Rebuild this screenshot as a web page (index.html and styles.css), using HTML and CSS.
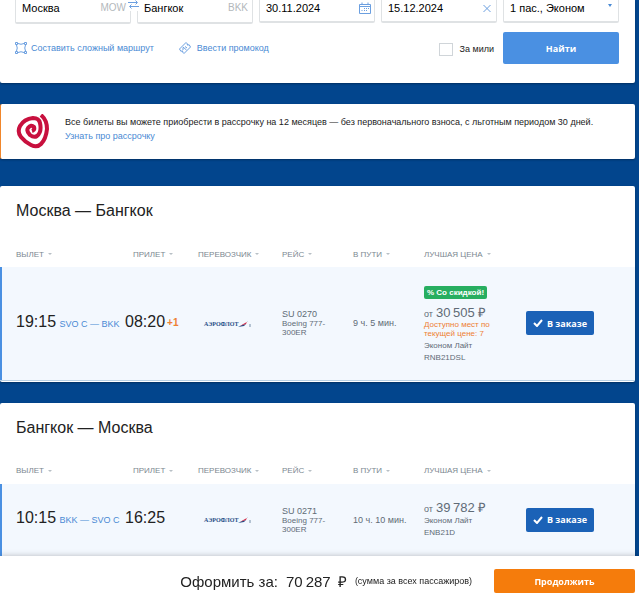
FILE: index.html
```html
<!DOCTYPE html>
<html lang="ru">
<head>
    <meta charset="UTF-8">
    <meta name="viewport" content="width=device-width, initial-scale=1.0">
    <title>Москва — Бангкок</title>
    <link rel="stylesheet" href="styles.css">
</head>
<body>
    <!-- Search form -->
    <form class="card search">
        <div class="fields">
            <div class="field tall">
                <input type="text" value="Москва" aria-label="Откуда">
                <span class="code">MOW</span>
                <button type="button" class="swap" aria-label="Поменять местами">
                    <svg width="11" height="9" viewBox="0 0 11 9"><path d="M0 2.500h9M7.500 .5l2 2-2 2M11 6.500H2M3.500 4.500l-2 2 2 2" /></svg>
                </button>
            </div>
            <div class="field tall">
                <input type="text" value="Бангкок" aria-label="Куда">
                <span class="code">BKK</span>
            </div>
            <div class="field">
                <input type="text" value="30.11.2024" aria-label="Туда">
                <svg class="field-icon" width="12" height="12" viewBox="0 0 12 12"><path d="M.5 2.500h11v9H.5zM.5 4.500h11M3 .5v2M9 .5v2" /><path d="M5 6.500h1M7 6.500h1M9 6.500h1M2.500 8.500h1M5 8.500h1M7 8.500h1" /></svg>
            </div>
            <div class="field">
                <input type="text" value="15.12.2024" aria-label="Обратно">
                <svg class="field-icon" width="12" height="12" viewBox="0 0 12 12"><path d="M2.500 3l7 7M9.500 3l-7 7" /></svg>
            </div>
            <div class="field">
                <select aria-label="Пассажиры">
                    <option>1 пас., Эконом</option>
                </select>
                <svg class="arrow" width="4" height="3" viewBox="0 0 4 3"><path d="M0 0h4L2 3z" /></svg>
            </div>
        </div>
        <div class="options">
            <a href="#" class="option">
                <svg width="12" height="12" viewBox="0 0 12 12"><path d="M.5.5h2v2h-2zM9.500.5h2v2h-2zM.5 9.500h2v2h-2zM9.500 9.500h2v2h-2zM3 1.500q3 1.500 6 0M3 10.500q3-1.500 6 0M1.500 3q1.500 3 0 6M10.500 3q-1.500 3 0 6" /></svg>
                Составить сложный маршрут
            </a>
            <a href="#" class="option promo">
                <svg width="12" height="12" viewBox="0 0 12 12"><path d="M7 .5l1.500 1.500-.3 1 1 .1.800-.6L11.500 5 5 11.500 3.500 10l.3-1-1-.1-.800.6L.5 7zM4 5l3.500 3M4 8V5.500M6 4.500l2 1.500" /></svg>
                Ввести промокод
            </a>
            <label class="miles"><input type="checkbox">За мили</label>
            <button type="submit" class="btn find">Найти</button>
        </div>
    </form>

    <!-- Installment banner -->
    <div class="card banner">
        <svg class="banner-logo" width="34" height="35" viewBox="0 0 34 35">
            <path class="swirl" d="M25 1Q31 6 31 15Q30 25 25 30Q21 34 15 31Q9 28 5 23Q1 18 4 12Q8 5 17 4Q23 4 24 9Q26 18 21 22Q18 24 14 21Q10 17 12 14Q15 10 18 13Q19 16 16 17" />
        </svg>
        <div>
            <p>Все билеты вы можете приобрести в рассрочку на 12 месяцев — без первоначального взноса, с льготным периодом 30 дней.</p>
            <a href="#">Узнать про рассрочку</a>
        </div>
    </div>

    <!-- Outbound flight -->
    <section class="card flight">
        <h2>Москва — Бангкок</h2>
        <table>
            <colgroup>
                <col class="col-departure"><col class="col-arrival"><col class="col-carrier"><col class="col-number"><col class="col-duration"><col class="col-price"><col>
            </colgroup>
            <thead>
                <tr>
                    <th>Вылет</th>
                    <th class="arrival">Прилет</th>
                    <th>Перевозчик</th>
                    <th>Рейс</th>
                    <th>В пути</th>
                    <th>Лучшая цена</th>
                    <td></td>
                </tr>
            </thead>
            <tbody>
                <tr class="with-discount">
                    <td class="times"><span class="time">19:15</span> <a href="#" class="route">SVO C — BKK</a></td>
                    <td class="times"><span class="time">08:20</span><span class="next-day">+1</span></td>
                    <td>
                        <div class="carrier">АЭРОФЛОТ<svg width="14" height="7" viewBox="0 0 14 7"><path class="wing-blue" d="M0 6l4-2 4-1-2 2z" /><path class="wing-red" d="M2 5l5-3 2-1-1 2z" /><path class="wing-grey" d="M9 1l1-1v1zM11 3h2v3h-2z" /></svg></div>
                    </td>
                    <td><div class="number">SU 0270</div><div class="plane">Boeing 777-300ER</div></td>
                    <td class="duration">9 ч. 5 мин.</td>
                    <td class="offer">
                        <div class="discount">% Со скидкой!</div>
                        <div class="price">от <b>30&#8201;505 ₽</b></div>
                        <div class="seats">Доступно мест по текущей цене: 7</div>
                        <div class="fare">Эконом Лайт<br>RNB21DSL</div>
                    </td>
                    <td>
                        <button type="button" class="btn ordered"><svg width="10" height="8" viewBox="0 0 10 8"><path d="M1 4l3 3 5-6" /></svg>В заказе</button>
                    </td>
                </tr>
            </tbody>
        </table>
    </section>

    <!-- Return flight -->
    <section class="card flight">
        <h2>Бангкок — Москва</h2>
        <table>
            <colgroup>
                <col class="col-departure"><col class="col-arrival"><col class="col-carrier"><col class="col-number"><col class="col-duration"><col class="col-price"><col>
            </colgroup>
            <thead>
                <tr>
                    <th>Вылет</th>
                    <th class="arrival">Прилет</th>
                    <th>Перевозчик</th>
                    <th>Рейс</th>
                    <th>В пути</th>
                    <th>Лучшая цена</th>
                    <td></td>
                </tr>
            </thead>
            <tbody>
                <tr>
                    <td class="times"><span class="time">10:15</span> <a href="#" class="route">BKK — SVO C</a></td>
                    <td class="times"><span class="time">16:25</span></td>
                    <td>
                        <div class="carrier">АЭРОФЛОТ<svg width="14" height="7" viewBox="0 0 14 7"><path class="wing-blue" d="M0 6l4-2 4-1-2 2z" /><path class="wing-red" d="M2 5l5-3 2-1-1 2z" /><path class="wing-grey" d="M9 1l1-1v1zM11 3h2v3h-2z" /></svg></div>
                    </td>
                    <td><div class="number">SU 0271</div><div class="plane">Boeing 777-300ER</div></td>
                    <td class="duration">10 ч. 10 мин.</td>
                    <td>
                        <div class="price">от <b>39&#8201;782 ₽</b></div>
                        <div class="fare">Эконом Лайт<br>ENB21D</div>
                    </td>
                    <td>
                        <button type="button" class="btn ordered"><svg width="10" height="8" viewBox="0 0 10 8"><path d="M1 4l3 3 5-6" /></svg>В заказе</button>
                    </td>
                </tr>
            </tbody>
        </table>
    </section>

    <!-- Order total -->
    <footer class="total">
        <span class="total-label">Оформить за:</span>
        <span class="total-price">70&#8201;287 &#8201;₽</span>
        <span class="total-note">(сумма за всех пассажиров)</span>
        <button type="button" class="btn continue">Продолжить</button>
    </footer>
</body>
</html>
```
FILE: styles.css
```css
/* General Styles */
* {
    box-sizing: border-box;
}

body {
    margin: 0;
    padding: 0 4px 50px 0; /* Room for the fixed total bar */
    background: #02458d;
    color: #222;
    font-family: "Liberation Sans", Arial, sans-serif;
    font-size: 9px;
}

a {
    color: #4a8ad4;
    text-decoration: none;
}

p {
    margin: 0;
}

svg {
    flex: none;
    fill: none;
    stroke: #6b9fe0;
}

.card {
    margin-bottom: 21px;
    background: #fff;
    border-radius: 2px;
    box-shadow: 0 1px 2px rgba(0, 0, 0, 0.3);
}

.btn {
    border: none;
    border-radius: 2px;
    color: #fff;
    font-family: "Open Sans", sans-serif;
    font-size: 9px;
    font-weight: bold;
    cursor: pointer;
}

/* Search form */
.search {
    padding: 0 16px 19px 15px;
    border-radius: 0 0 2px 2px;
}

.fields {
    display: grid;
    grid-template-columns: repeat(5, 1fr);
    align-items: start;
    gap: 6px;
    height: 24px;
}

.field {
    position: relative;
    height: 23px;
    border: 1px solid #dfe2e4;
    border-top: none;
    border-bottom-width: 2px;
    border-radius: 0 0 2px 2px;
}

.field.tall {
    height: 24px;
}

.field input,
.field select {
    display: block;
    width: 100%;
    height: 15px;
    padding: 0 6px;
    border: none;
    background: none;
    color: #000;
    font-family: inherit;
    font-size: 11px;
    appearance: none;
    outline: none;
}

.field.tall input {
    height: 16px;
}

.code {
    position: absolute;
    top: 2px;
    right: 4px;
    color: #b3b8bc;
    font-size: 10px;
    line-height: 12px;
}

.swap {
    position: absolute;
    top: 0;
    right: -9px;
    z-index: 1;
    display: flex;
    padding: 0 0 2px;
    border: none;
    background: #fff;
}

.field-icon {
    position: absolute;
    top: 2px;
    right: 3px;
}

.arrow {
    position: absolute;
    top: 4px;
    right: 6px;
    fill: #4a8ad4;
    stroke: none;
}

.options {
    display: flex;
    align-items: center;
    margin-top: 8px;
}

.option {
    display: flex;
    align-items: center;
    gap: 4px;
}

.option.promo {
    gap: 6px;
    margin-left: 25px;
}

.miles {
    display: flex;
    align-items: center;
    gap: 7px;
    margin: 2px 9px 0 auto;
}

.miles input {
    width: 14px;
    height: 13px;
    margin: 0;
    border: 1px solid #d0d5d9;
    background: #fff;
    appearance: none;
}

.find {
    width: 116px;
    height: 32px;
    background: #4a90e2;
}

/* Installment banner */
.banner {
    display: flex;
    gap: 15px;
    min-height: 55px;
    margin-bottom: 27px;
    padding: 10px 15px;
    border-left: 1px solid #f0862b;
    line-height: 14px;
}

.banner > div {
    padding-top: 1px;
}

.swirl {
    stroke: #c8103e;
    stroke-width: 4;
}

/* Flight cards */
.flight {
    padding: 16px 0 1px;
}

.flight + .flight {
    padding-bottom: 0;
}

h2 {
    margin: 0;
    padding-left: 16px;
    font-size: 16px;
    font-weight: normal;
    line-height: 18px;
}

table {
    width: 100%;
    margin-top: 21px;
    border-collapse: collapse;
    table-layout: fixed;
}

.col-departure {
    width: 125px;
}

.col-arrival {
    width: 73px;
}

.col-carrier {
    width: 84px;
}

.col-number,
.col-duration {
    width: 71px;
}

.col-price {
    width: 102px;
}

th,
td {
    padding: 0;
    text-align: left;
    white-space: nowrap;
}

th {
    height: 26px;
    color: #7b8790;
    font-size: 8px;
    font-weight: normal;
    text-transform: uppercase;
}

/* Sort mark */
th::after {
    content: "";
    display: inline-block;
    margin-left: 4px;
    border: 2px solid transparent;
    border-top-color: #b8c0c6;
    border-bottom: none;
    vertical-align: middle;
}

th:first-child,
td:first-child {
    padding-left: 16px;
}

th.arrival {
    padding-left: 8px;
}

tbody tr {
    height: 72px;
    background: #f3f8fe;
    box-shadow: inset 2px 0 #4a90e2;
}

tbody .with-discount {
    height: 113px;
    border-bottom: 1px solid #b9d0e4;
}

.flight tbody td {
    color: #5f6b76;
}

.times {
    padding-bottom: 3px;
}

.flight .time {
    color: #222;
    font-size: 16px;
}

.route {
    margin-left: 1px;
}

.next-day {
    margin-left: 2px;
    color: #ee8034;
    font-size: 10px;
    font-weight: bold;
    vertical-align: 1px;
}

.carrier {
    display: flex;
    align-items: center;
    padding: 2px 0 0 6px;
    color: #1f4e86;
    font-family: "Liberation Serif", serif;
    font-size: 6px;
    font-weight: bold;
    line-height: 7px;
}

.carrier svg {
    stroke: none;
}

.wing-blue {
    fill: #1f4e86;
}

.wing-red {
    fill: #d3304c;
}

.wing-grey {
    fill: #b4c3d3;
}

.number {
    line-height: 10px;
}

.plane {
    width: 50px;
    font-size: 8px;
    line-height: 9px;
    white-space: normal;
}

.offer {
    padding-top: 3px;
}

.discount {
    width: fit-content;
    margin-bottom: 6px;
    padding: 0 3px;
    border-radius: 2px;
    background: #27ae60;
    color: #fff;
    font-size: 8px;
    font-weight: bold;
    line-height: 13px;
}

.price {
    display: flex;
    align-items: baseline;
    gap: 3px;
    height: 15px;
    line-height: 15px;
}

.price b {
    font-size: 13px;
    font-weight: normal;
}

.seats {
    width: 70px;
    margin-bottom: 2px;
    color: #ee8034;
    font-size: 8px;
    line-height: 9px;
    white-space: normal;
}

.fare {
    font-size: 8px;
    line-height: 12px;
}

.ordered {
    display: flex;
    align-items: center;
    justify-content: center;
    gap: 4px;
    width: 68px;
    height: 24px;
    padding: 0;
    background: #1b62b7;
}

.ordered path {
    stroke: #fff;
    stroke-width: 2;
}

/* Order total */
.total {
    position: fixed;
    right: 0;
    bottom: 0;
    left: 0;
    display: flex;
    align-items: center;
    justify-content: flex-end;
    height: 50px;
    padding-right: 4px;
    background: #fff;
    box-shadow: 0 0 6px rgba(0, 0, 0, 0.25);
}

.total-label,
.total-price {
    margin-right: 8px;
    font-size: 15px;
}

.total-note {
    margin-right: 22px;
}

.continue {
    width: 141px;
    height: 24px;
    background: #f57c0c;
}
```
